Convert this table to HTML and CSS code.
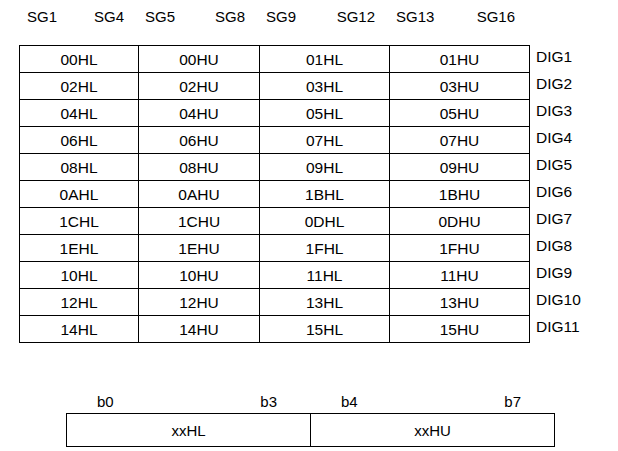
FILE: index.html
```html
<!DOCTYPE html>
<html>
<head>
<meta charset="utf-8" />
<link rel="stylesheet" href="styles.css">
</head>
<body>
<div class="page">
	<div class="sg_row">
		<div class="sg_cell"><span>SG1</span><span>SG4</span></div>
		<div class="sg_cell"><span>SG5</span><span>SG8</span></div>
		<div class="sg_cell"><span>SG9</span><span>SG12</span></div>
		<div class="sg_cell"><span>SG13</span><span>SG16</span></div>
	</div>

	<table class="map">
		<colgroup>
			<col class="c1"/><col class="c2"/><col class="c3"/><col class="c4"/><col class="c5"/>
		</colgroup>
		<tr><td>00HL</td><td>00HU</td><td>01HL</td><td>01HU</td><th>DIG1</th></tr>
		<tr><td>02HL</td><td>02HU</td><td>03HL</td><td>03HU</td><th>DIG2</th></tr>
		<tr><td>04HL</td><td>04HU</td><td>05HL</td><td>05HU</td><th>DIG3</th></tr>
		<tr><td>06HL</td><td>06HU</td><td>07HL</td><td>07HU</td><th>DIG4</th></tr>
		<tr><td>08HL</td><td>08HU</td><td>09HL</td><td>09HU</td><th>DIG5</th></tr>
		<tr><td>0AHL</td><td>0AHU</td><td>1BHL</td><td>1BHU</td><th>DIG6</th></tr>
		<tr><td>1CHL</td><td>1CHU</td><td>0DHL</td><td>0DHU</td><th>DIG7</th></tr>
		<tr><td>1EHL</td><td>1EHU</td><td>1FHL</td><td>1FHU</td><th>DIG8</th></tr>
		<tr><td>10HL</td><td>10HU</td><td>11HL</td><td>11HU</td><th>DIG9</th></tr>
		<tr><td>12HL</td><td>12HU</td><td>13HL</td><td>13HU</td><th>DIG10</th></tr>
		<tr><td>14HL</td><td>14HU</td><td>15HL</td><td>15HU</td><th>DIG11</th></tr>
	</table>

	<div class="byte">
		<div class="bit_row">
			<div class="bit_cell"><span>b0</span><span>b3</span></div>
			<div class="bit_cell"><span>b4</span><span>b7</span></div>
		</div>
		<div class="byte_box">
			<div class="byte_half">xxHL</div>
			<div class="byte_half">xxHU</div>
		</div>
	</div>
</div>
</body>
</html>
```

FILE: styles.css
```css
body{
	margin:0;
	background:#fff;
	color:#000;
	font-family:"Liberation Sans", Arial, sans-serif;
	font-size:15px;
}

.page{
	padding:8px 0 0 19px;
}

.sg_row{
	display:grid;
	grid-template-columns:119px 121px 130px 140px;
	height:17px;
	line-height:17px;
}
.sg_cell{
	display:flex;
	justify-content:space-between;
	padding:0 14px 0 7px;
}
.sg_cell:first-child{
	padding-left:8px;
}

.map{
	margin-top:20px;
	border-collapse:collapse;
	table-layout:fixed;
	width:580px;
}
.map .c1{ width:119px; }
.map .c2{ width:121px; }
.map .c3{ width:130px; }
.map .c4{ width:140px; }
.map .c5{ width:70px; }

.map tr{
	height:27px;
}
.map td{
	border:1px solid #000;
	padding:0;
	text-align:center;
	vertical-align:middle;
	font-size:15.5px;
	line-height:17px;
}
.map th{
	font-weight:normal;
	text-align:left;
	vertical-align:top;
	padding:2px 0 0 6px;
	font-size:15.5px;
	line-height:17px;
}

.byte{
	margin:50px 0 0 47px;
	width:489px;
}
.bit_row{
	display:flex;
	height:20px;
	line-height:17px;
}
.bit_cell{
	flex:1;
	display:flex;
	justify-content:space-between;
	padding:0 32px 0 31px;
}
.bit_cell + .bit_cell{
	padding:0 34px 0 32px;
}
.byte_box{
	display:flex;
	border:1px solid #000;
	height:32px;
}
.byte_half{
	flex:1;
	display:flex;
	align-items:center;
	justify-content:center;
}
.byte_half + .byte_half{
	border-left:1px solid #000;
}
```
